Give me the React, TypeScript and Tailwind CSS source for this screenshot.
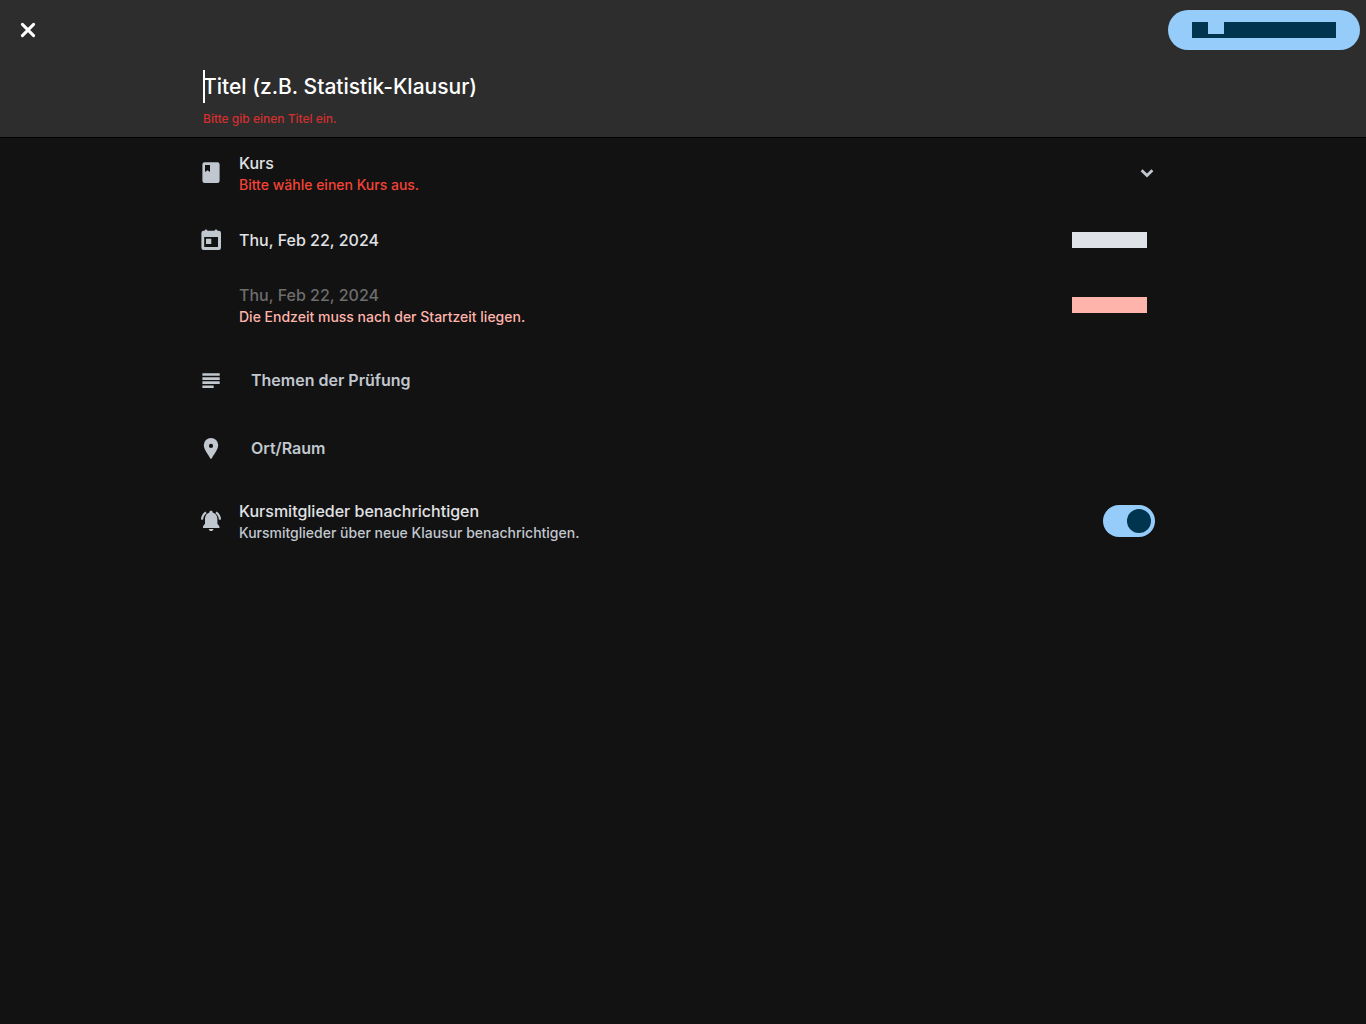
import type { ReactNode } from "react";

function Icon({ children }: { children: ReactNode }) {
  return (
    <svg viewBox="0 0 24 24" className="block size-6" fill="currentColor" aria-hidden="true">
      {children}
    </svg>
  );
}

const bookIcon = (
  <Icon>
    <path fillRule="evenodd" d="M5.6 1.2h12.8a2.2 2.2 0 0 1 2.2 2.2v16.4a2.2 2.2 0 0 1-2.2 2.2H5.6a2.2 2.2 0 0 1-2.2-2.2V3.4a2.2 2.2 0 0 1 2.2-2.2ZM6 4v7l2.5-1.7L11 11V4Z" />
  </Icon>
);

const calendarIcon = (
  <Icon>
    <path fillRule="evenodd" d="M7 1.4c.8 0 1.4.6 1.4 1.4h7.2a1.4 1.4 0 0 1 2.8 0h1.4A2.2 2.2 0 0 1 22 5v14.8a2.2 2.2 0 0 1-2.2 2.2H4.6a2.2 2.2 0 0 1-2.2-2.2V5a2.2 2.2 0 0 1 2.2-2.2h1C5.600 2 6.200 1.400 7 1.400ZM5.200 9v10h13.800V9Z" />
    <path d="M7 10.700h5.300v5.300H7z" />
  </Icon>
);

const subjectIcon = (
  <Icon>
    <path d="M3.400 5.200h17.300v2.600H3.400zM3.400 9.300h17.300v2.600H3.400zM3.400 13.300h17.300v2.600H3.400zM3.400 17.400h11.300V20H3.400z" />
  </Icon>
);

const placeIcon = (
  <Icon>
    <path fillRule="evenodd" d="M12 1.900a7.200 7.200 0 0 0-7.200 7.200c0 4.700 4.500 9.700 6.500 13.300.3.600 1.100.6 1.400 0 2-3.600 6.500-8.600 6.500-13.300A7.200 7.200 0 0 0 12 1.900ZM12 7.800a2.100 2.100 0 1 1 0 4.200 2.100 2.100 0 0 1 0-4.200Z" />
  </Icon>
);

const bellIcon = (
  <Icon>
    <path d="M12 1.800c-1 0-1.600.7-1.600 1.600C7.700 4.200 6 6.700 6 9.700v5.100l-2 2.400V19h16.400v-1.800l-2-2.400V9.700c0-3-1.900-5.500-4.700-6.300 0-.9-.7-1.600-1.700-1.600ZM9.800 20h4.600c0 1.200-1 2.100-2.300 2.100S9.800 21.200 9.800 20Z" />
    <path d="M7 3.400C4.700 5 3.200 7.500 3 10.600M17 3.400c2.300 1.600 3.800 4.100 4 7.200" fill="none" stroke="currentColor" strokeWidth="2.200" />
  </Icon>
);

function Row({
  icon,
  className,
  children,
}: {
  icon?: ReactNode;
  className: string;
  children: ReactNode;
}) {
  return (
    <div className={`flex items-center px-4 ${className}`}>
      <span className="mr-4 size-6 shrink-0 text-[#c1c7ce]">{icon}</span>
      {children}
    </div>
  );
}

export default function App() {
  return (
    <div className="min-h-screen bg-[#121212] font-['Inter','Roboto',sans-serif] text-[#e1e2e5]">
      <header className="border-b border-black bg-[#2d2d2d] pb-2.5">
        <div className="flex h-[60px] items-center justify-between pr-1.5 pl-4">
          <button type="button" aria-label="Schließen" className="text-white">
            <svg viewBox="0 0 24 24" className="size-6" fill="none" stroke="currentColor" strokeWidth="3" strokeLinecap="round">
              <path d="M6.400 6.400 17.600 17.600M17.600 6.400 6.400 17.600" />
            </svg>
          </button>
          <button
            type="button"
            aria-label="Speichern"
            className="flex h-10 items-center rounded-full bg-[#95ccf9] px-6"
          >
            <span className="flex h-4 w-36 bg-[#00344f] pl-4">
              <span className="h-3 w-4 bg-[#95ccf9]" />
            </span>
          </button>
        </div>
        <div className="mx-auto max-w-[1000px] px-5">
          <div className="relative mt-2.5 h-[33px]">
            <input
              aria-label="Titel"
              aria-describedby="title-error"
              placeholder="Titel (z.B. Statistik-Klausur)"
              className="block h-[33px] w-full bg-transparent text-[21px] font-medium text-white caret-transparent outline-none placeholder:text-white placeholder:opacity-100"
            />
            <span className="absolute top-0 left-0 h-[33px] w-0.5 bg-white" />
          </div>
          <p id="title-error" className="mt-2 text-xs leading-4 font-medium text-[#d32f2f]">
            Bitte gib einen Titel ein.
          </p>
        </div>
      </header>

      <main className="mx-auto max-w-[1000px]">
        <Row icon={bookIcon} className="h-[70px]">
          <button type="button" className="flex flex-1 items-center justify-between pr-2 text-left">
            <span>
              <span className="block text-base leading-6 font-medium">Kurs</span>
              <span className="block text-sm leading-5 font-medium text-[#f44336]">
                Bitte wähle einen Kurs aus.
              </span>
            </span>
            <svg viewBox="0 0 24 24" className="size-6 text-[#c1c7ce]" fill="none" stroke="currentColor" strokeWidth="2.800">
              <path d="M6.600 9.200 12 14.600 17.400 9.200" />
            </svg>
          </button>
        </Row>
        <Row icon={calendarIcon} className="h-16">
          <button type="button" className="text-base leading-6 font-medium">
            Thu, Feb 22, 2024
          </button>
          <button type="button" aria-label="Startzeit" className="mr-5 ml-auto h-4 w-[75px] bg-[#dfe3e8]" />
        </Row>
        <Row className="h-[66px]">
          <div>
            <button type="button" className="block text-base leading-6 font-medium text-[#6d6d6d]">
              Thu, Feb 22, 2024
            </button>
            <p className="text-sm leading-5 font-medium text-[#ffb4ab]">
              Die Endzeit muss nach der Startzeit liegen.
            </p>
          </div>
          <button type="button" aria-label="Endzeit" className="mr-5 ml-auto h-4 w-[75px] bg-[#ffb4ab]" />
        </Row>
        <Row icon={subjectIcon} className="mt-2 h-[68px]">
          <input
            aria-label="Themen der Prüfung"
            placeholder="Themen der Prüfung"
            className="ml-3 h-10 flex-1 bg-transparent text-base font-semibold outline-none placeholder:text-[#c1c7ce] placeholder:opacity-100"
          />
        </Row>
        <Row icon={placeIcon} className="h-[68px]">
          <input
            aria-label="Ort/Raum"
            placeholder="Ort/Raum"
            className="ml-3 h-10 flex-1 bg-transparent text-base font-semibold outline-none placeholder:text-[#c1c7ce] placeholder:opacity-100"
          />
        </Row>
        <Row icon={bellIcon} className="h-[78px]">
          <label htmlFor="notify" className="flex-1">
            <span className="block text-base leading-6 font-medium">Kursmitglieder benachrichtigen</span>
            <span className="block text-sm leading-5 font-medium text-[#c1c7ce]">
              Kursmitglieder über neue Klausur benachrichtigen.
            </span>
          </label>
          <input
            id="notify"
            type="checkbox"
            role="switch"
            defaultChecked
            className="mr-3 flex h-8 w-13 appearance-none items-center rounded-full bg-[#42474e] p-1 before:block before:size-6 before:rounded-full before:bg-[#8b9198] checked:justify-end checked:bg-[#95ccf9] checked:before:bg-[#00344f]"
          />
        </Row>
      </main>
    </div>
  );
}
